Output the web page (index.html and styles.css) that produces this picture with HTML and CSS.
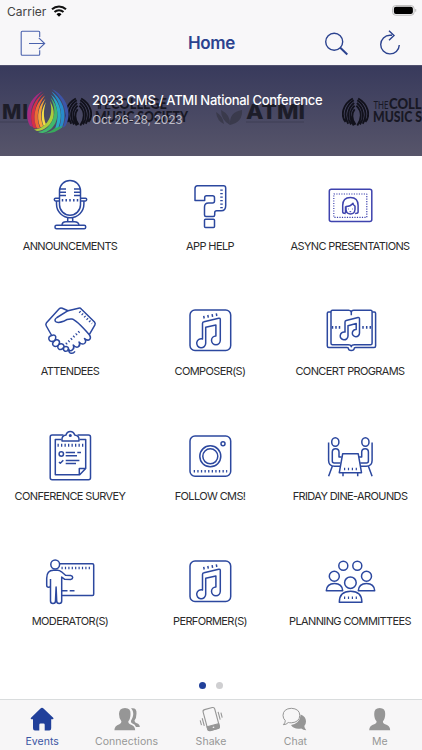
FILE: index.html
```
<!DOCTYPE html>
<html lang="en">
<head>
    <meta charset="UTF-8">
    <meta name="viewport" content="width=device-width, initial-scale=1.0">
    <title>Home</title>
    <link rel="stylesheet" href="styles.css">
</head>
<body>

<!-- Shared shapes -->
<svg class="defs" width="0" height="0">
    <symbol id="note" viewBox="0 0 60 60">
        <rect x="10" y="10" width="40.7" height="40.5" rx="5"/>
        <path d="M22.5 23.6q0-1.5 1.5-1.8L38.7 18.2q1.6-.3 1.6 1.3V40.3a4.4 4.4 0 1 1-4.4-4.4V24.9L25.7 27.3V43.3a4.5 4.5 0 1 1-3.2-4.3z"/>
        <path d="M24.2 18.5l-.5-2.7M28.3 17.7l-.5-2.7M32.6 16.8l-.5-2.7M36.8 16l-.5-2.7"/>
    </symbol>
    <symbol id="leaf" viewBox="0 0 30 32">
        <path d="M12 1C1 7-2 20 4 27M13 3C4 9 1 20 7 29M13.500 6C7 11 4 21 10 30M14 9C9 14 7 22 13 31M14 13C11 17 10 24 15 30"/>
        <path d="M18 1c11 6 14 19 8 26M17 3c9 6 12 17 6 26M16.500 6c6.500 5 9.500 15 3.500 24M16 9c5 5 7 13 1 22"/>
    </symbol>
</svg>

<div class="screen">
    <header class="header">
        <div class="status-bar">
            <span>Carrier</span>
            <svg class="wifi" viewBox="0 0 16 12">
                <path d="M1 4.300a10.200 10.200 0 0 1 14 0M3.500 7a6.600 6.600 0 0 1 9 0"/>
                <path class="fill" d="M8 11.700L5.500 9.200a3.600 3.600 0 0 1 5 0z"/>
            </svg>
            <svg class="battery" viewBox="0 0 25 11">
                <rect class="shell" x=".6" y=".6" width="21.500" height="9.600" rx="3"/>
                <rect class="fill" x="1.900" y="1.700" width="19" height="7.400" rx="2"/>
                <path class="shell" d="M23.700 4v2.700"/>
            </svg>
        </div>
        <nav class="nav-bar">
            <svg class="nav-icon exit" viewBox="0 0 28 28">
                <path d="M20.700 7V2.300q0-1-1-1H3.200q-1 0-1 1v22q0 1 1 1h16.500q1 0 1-1V20.200"/>
                <path d="M10 13.500h15.500M19.800 7.800l5.900 5.700-5.900 5.700"/>
            </svg>
            <h1>Home</h1>
            <div class="nav-actions">
                <svg class="nav-icon" viewBox="0 0 28 28">
                    <circle cx="12.200" cy="11.700" r="8.500"/>
                    <path d="M18.300 17.800l7 6.700" stroke-width="2"/>
                </svg>
                <svg class="nav-icon" viewBox="0 0 28 28">
                    <path d="M16 5.300h-2a9.300 9.300 0 1 0 9.300 9.700M13 .8l5 4.700-5 4.700"/>
                </svg>
            </div>
        </nav>
    </header>

    <section class="banner">
        <svg class="banner-art" viewBox="0 0 422 90">
            <text class="wide" x="2" y="53" textLength="26">MI</text>
            <path class="rule" d="M0 56h28M246 56h58"/>
            <use href="#leaf" x="65" y="30" width="27" height="32"/>
            <text class="thin" x="95" y="43" font-size="12" textLength="16">THE</text>
            <text x="111" y="43" font-size="15" textLength="56" lengthAdjust="spacingAndGlyphs">COLLEGE</text>
            <text x="95" y="55.500" font-size="15.500" textLength="93" lengthAdjust="spacingAndGlyphs">MUSIC SOCIETY</text>
            <g class="faded">
                <path d="M216 46q1 9 8 12q-1-8-8-12zM221 44q0 10 9 15q1-10-9-15zM242 44q-13 2-12 15q13-3 12-15z"/>
            </g>
            <text class="wide" x="246" y="53" textLength="59" lengthAdjust="spacingAndGlyphs">ATMI</text>
            <use href="#leaf" x="342" y="30" width="27" height="32"/>
            <text class="thin" x="373.500" y="43" font-size="12" textLength="15" lengthAdjust="spacingAndGlyphs">THE</text>
            <text x="389" y="43" font-size="15.500" textLength="57" lengthAdjust="spacingAndGlyphs">COLLEGE</text>
            <text x="373" y="55.500" font-size="15.500" textLength="93" lengthAdjust="spacingAndGlyphs">MUSIC SOCIETY</text>
        </svg>
        <svg class="banner-logo" viewBox="0 0 42 46">
            <path fill="#a72b81" d="M16 3C3 9-4 25 3 38l3 1C1 26 5 12 16 3z"/>
            <path fill="#d62e49" d="M17 5C6 12 1 27 6.500 40l3 .5C5 28 8 14 17 5z"/>
            <path fill="#ed6a35" d="M18 7.500C9 14 4.500 28 10 40.500l3-.5C8.500 29 11 17 18 7.500z"/>
            <path fill="#f5a33a" d="M18.500 10.500C12 17 8.500 28 13.500 39.500l2.700-1.200C12.500 29 14 19 18.500 10.500z"/>
            <path fill="#f5dc45" d="M19 14C15 20 13 29 16.700 38l2.300-1.500C16 29 16.500 21 19 14z"/>
            <path fill="#3d55a8" d="M25 1C39 8 46 24 38.500 38l-3 2C42 26 37 12 25 1z"/>
            <path fill="#278bca" d="M24.500 3.500C36 11 41 26 35 39.500l-3.500 2C37 28 34 15 24.500 3.500z"/>
            <path fill="#29aac5" d="M24 6.500C33 14 37 27 31 40.500l-4 2.500C33 30 31 18 24 6.500z"/>
            <path fill="#40b76d" d="M23.500 9.500C31 17 34 32 24 41q-4 3-8 4-3 .3-5-1 8-1 13-9C29 27 28 18 23.500 9.500z"/>
            <path fill="#a9ce3e" d="M23 13C28 21 29 32 20 39q-5 4-10 4l-3-1.500q7 0 13-7C25 28 25 20 23 13z"/>
            <path fill="#38a95c" d="M36 38q-6 7.500-19 7.500 7-2 11-5.500z"/>
        </svg>
        <div class="banner-text">
            <h2>2023 CMS / ATMI National Conference</h2>
            <p>Oct 26-28, 2023</p>
        </div>
    </section>

    <main class="grid">
        <a class="item">
            <svg viewBox="0 0 60 60">
                <rect x="19.500" y="5.500" width="21" height="34.700" rx="10.500"/>
                <path d="M20 14h6M20 17.300h6M20 20.500h6M40 14h-6M40 17.300h-6M40 20.500h-6"/>
                <path d="M22.500 24v2.500M26.200 24v2.500M30 24v2.500M33.800 24v2.500M37.500 24v2.500"/>
                <path d="M19.500 23.300h-4q-1.200 0-1.200 1.300t1.200 1.300h4M40.500 23.300h5q1.200 0 1.200 1.300t-1.200 1.300h-5"/>
                <path d="M16.500 26v3a13.700 13.700 0 0 0 27.400 0v-3M27.700 43v4M32.700 43v4M22 50.300q0-3.500 4-3.500h8.500q4 0 4.500 3.500"/>
                <rect x="15" y="50.300" width="30.700" height="3.500" rx="1.500"/>
            </svg>
            <span>ANNOUNCEMENTS</span>
        </a>
        <a class="item">
            <svg viewBox="0 0 60 60">
                <path d="M17.500 10.700h26q2.200 0 2.200 2.200v17.500q0 5.300-4.500 5.300h-4.500q-2 0-2 2v2.300q0 1.500-1.500 1.500h-7.200q-1.500 0-1.500-1.500v-8q0-4 4-4h4q2 0 2-2v-3.300q0-2-2-2h-6q-1.800 0-1.800 1.800v3H15v-12q0-2.800 2.500-2.800z"/>
                <rect x="24.500" y="44.200" width="10" height="8.300" rx="1"/>
                <path d="M41.500 14.500v19" stroke-dasharray="1.300 2.200" stroke-width="2.500"/>
            </svg>
            <span>APP HELP</span>
        </a>
        <a class="item">
            <svg class="violet" viewBox="0 0 60 60">
                <rect x="9.300" y="14.300" width="42.500" height="32.300" rx="2"/>
                <rect class="dots" x="13.800" y="19" width="33" height="23.300"/>
                <path d="M22.700 37v-6.500q0-8 7.700-8t7.700 8V37q0 1.500-3 1.500M22.700 37q0 1.500 3 1.500M26 31.500v3q.5 4.500 4.500 4.500t4.500-4.500v-3.300q-2-1-2-3-2.500 3.300-7 3.300zM25.500 38v-6.500"/>
                <path d="M28 34h.7M32 34h.7M29.500 36.700h1.700" stroke-width="1"/>
            </svg>
            <span>ASYNC PRESENTATIONS</span>
        </a>

        <a class="item">
            <svg viewBox="0 0 60 60">
                <path d="M11.700 35.500L6.300 26q-1-1.700.2-3.200L19 9q1.500-1.500 3.300-.7L28 10.700l10.500-2.500q1.800-.4 3 1L54.500 22q1.300 1.500.3 3.200l-5.500 9.500"/>
                <path d="M28 10.700L17 17.500q-3 2-1.500 4 2 2 8-.2 4-2.700 8.300-2.300Q36 19.500 49.300 34.700q2 2.500.5 4.500-2 2.200-5.300-.7 2.300 3 0 5-2.500 1.700-5.500-1.500 1.700 3-.5 4.700-2.300 1.600-5.300-1.700 1.500 3-.5 4.500-2 2.500-5.400 0"/>
                <path d="M11.700 35.500q-3.700 1-2.700 4t5.500 1.300q-3 2.500-1.200 4.700 2.500 2.300 5.400-.8-2 3 .3 4.500 2.700 1.300 4.800-2-1 3 1 4 2.300.7 4.200-1.800-.5 2.300 1 3.400 3 1.500 5-1.500M11.700 35.500q3-1.300 4 1 .5 2-1.200 4.300 2.500-2 4.300-.2 1.500 1.700-.1 4.100 2.400-1.900 4.300-.3 1.500 1.500.8 2.800 2.500-1.500 4 0 1.200 1 .2 2.200"/>
                <path class="diag" d="M39.500 11.500l12.500 12M39.300 31.500L26 44"/>
            </svg>
            <span>ATTENDEES</span>
        </a>
        <a class="item">
            <svg><use href="#note"/></svg>
            <span>COMPOSER(S)</span>
        </a>
        <a class="item">
            <svg viewBox="0 0 60 60">
                <path d="M31.300 15.300v-3q-.5-2-2.500-2H12.500q-1.500 0-1.500 1.500v31.500q0 1.500 1.500 1.500H28q3.300 0 3.300 2 0-2 3.300-2h16q1.500 0 1.500-1.500V11.800q0-1.500-1.500-1.500H33.800q-2.500 0-2.500 2"/>
                <path d="M11 12H8.500Q7.300 12 7.300 13.200V46q0 1.500 1.500 1.500H27q1.500 0 1.500 1.300 0 1.700 2.800 1.700t2.800-1.700q0-1.300 1.500-1.300h18.500q1.500 0 1.500-1.500V13.200q0-1.200-1.200-1.200h-2.200"/>
                <path d="M25 22q0-1.200 1.200-1.500L38 17.600q1.500-.3 1.500 1.200V33a3.600 3.600 0 1 1-3.300-3.500V23.500L28 25.700V36a3.900 3.900 0 1 1-3-3.900z"/>
                <path d="M12.500 26v2.700M16 26v2.700M19.500 26v2.700M43 26v2.700M46.700 26v2.700M50.300 26v2.700"/>
            </svg>
            <span>CONCERT PROGRAMS</span>
        </a>

        <a class="item">
            <svg viewBox="0 0 60 60">
                <path d="M23.500 9H12.200q-2 0-2 2v40.700q0 2 2 2h36.300q2 0 2-2V11q0-2-2-2H37.500"/>
                <path d="M21.500 13.500h-6.200v35.200h24.400l6-6.200v-29h-6.200M39.300 48.700v-6.200h6.400"/>
                <path d="M22 15q-.7-5.500 4-6 1-3.500 4.300-3.500T34.700 9q5 .5 4.300 6z"/>
                <circle cx="30.300" cy="9.500" r=".8"/>
                <path d="M17.500 19.300h27" stroke-width="3" stroke-dasharray="1.300 2.200"/>
                <circle cx="21.300" cy="28" r="2.200"/>
                <path d="M25.700 26.600H35M37.300 26.600H41M25.700 29.700H37M25.700 34.500h13.700M25.700 37.600H36M19 36l1.300 1.300 3-3"/>
            </svg>
            <span>CONFERENCE SURVEY</span>
        </a>
        <a class="item">
            <svg viewBox="0 0 60 60">
                <rect x="10" y="10" width="40.700" height="40.300" rx="5"/>
                <circle cx="30.300" cy="30.300" r="10.500"/>
                <circle cx="30.300" cy="30.300" r="7.500"/>
                <circle cx="43" cy="17.700" r="2"/>
                <path d="M13.700 45.300h33.500" stroke-width="2.600" stroke-dasharray="1.300 2.300"/>
            </svg>
            <span>FOLLOW CMS!</span>
        </a>
        <a class="item">
            <svg viewBox="0 0 60 60">
                <g id="diner">
                    <ellipse cx="15.300" cy="16" rx="3.600" ry="4.300"/>
                    <path d="M8.600 16.500V34.500q0 5.700 6 5.700h5.600M12.500 39.700L8.600 50.300M12.300 35V26q0-3.300 3.300-3.300T19 26v5h2.700M12.300 35q0 2 2 2h6.200"/>
                </g>
                <use href="#diner" transform="matrix(-1 0 0 1 60.700 0)"/>
                <path d="M22.700 27.700h15.500l3.300 19H19.300zM23 47v3.300M37.700 47v3.300"/>
                <path d="M24 43h14" stroke-width="2.600" stroke-dasharray="1.200 2.700"/>
            </svg>
            <span>FRIDAY DINE-AROUNDS</span>
        </a>

        <a class="item">
            <svg viewBox="0 0 60 60">
                <circle cx="15.200" cy="13.500" r="4.400"/>
                <path d="M19.500 12.700h33q1.200 0 1.200 1.200v29.300q0 1.200-1.200 1.200h-31"/>
                <path d="M21.500 17h29.500" stroke-width="2.500" stroke-dasharray="1.200 2.200"/>
                <path d="M10.500 28v22q0 2.500 2.500 2.500t2.500-2.500l.6-14 .6 14q0 2.500 2.500 2.500t2.500-2.500V26l3 2.300 6 .2q2-.3 2-2t-2-2l-5.200-.3-4-3.400q-2-1.500-4-1.500h-4q-6.800 0-6.800 8v7q0 2 1.900 2t1.900-2"/>
                <path d="M22 39.700h5.500M29.700 39.700h4.800"/>
            </svg>
            <span>MODERATOR(S)</span>
        </a>
        <a class="item">
            <svg><use href="#note"/></svg>
            <span>PERFORMER(S)</span>
        </a>
        <a class="item">
            <svg viewBox="0 0 60 60">
                <circle cx="23.300" cy="14.700" r="4.500"/>
                <circle cx="37.300" cy="14.700" r="4.500"/>
                <circle cx="14.300" cy="25.300" r="5"/>
                <circle cx="46.500" cy="25.300" r="5"/>
                <circle cx="30.400" cy="31.700" r="5.800"/>
                <path d="M6.300 39.700q.5-7.200 8.200-7.200t8.200 7.200zM38.300 39.700q.5-7.200 8.200-7.200t8.200 7.200zM19.300 51.300q0-11 11.300-11t11.300 11z"/>
                <path d="M24 46.700h14" stroke-width="2.500" stroke-dasharray="1.200 2.700"/>
            </svg>
            <span>PLANNING COMMITTEES</span>
        </a>
    </main>

    <div class="pager">
        <span class="dot active"></span>
        <span class="dot"></span>
    </div>

    <footer class="tab-bar">
        <a class="tab active">
            <svg viewBox="0 0 30 26">
                <path d="M15 1.800q.8 0 1.500.7l9.700 9.200q1 1.500-.7 1.500h-1.300v9q0 2.200-2 2.200h-4.500v-5.700q0-1.200-1.200-1.200h-3q-1.200 0-1.200 1.200v5.700H8q-2 0-2-2.200v-9H4.700q-1.700 0-.7-1.500l9.500-9.200q.7-.7 1.500-.7z"/>
            </svg>
            <span>Events</span>
        </a>
        <a class="tab">
            <svg viewBox="0 0 30 26">
                <path d="M19 2.300q6-1 5.500 5.200 0 4.500-2 7 0 2 2.300 2.700 3 1 3 3.800H24q-.7-2.500-4-3.700-1.500-.8-1-2.500 3-5 2-9-.3-2-2-3.500z"/>
                <path d="M13 1.900q6 0 5.500 6 0 5-2.200 7.300-.3 2 1.700 3 5.200 1.500 5.200 6H2.400q0-4.500 5-6 2.200-.8 2-3Q7 12.500 7 7.900q0-6 6-6z"/>
            </svg>
            <span>Connections</span>
        </a>
        <a class="tab">
            <svg class="line" viewBox="0 0 30 26">
                <g transform="rotate(-15 15 13)">
                    <rect x="9.200" y="2.300" width="12" height="21.500" rx="2"/>
                    <path class="solid" d="M9.200 19.500h12v2.500q0 2-2 2h-8q-2 0-2-2z"/>
                    <path d="M14.500 21.700h1.500" stroke="#f7f6f7"/>
                    <path d="M6.700 10v8M4.200 11.500v5M23.700 8v8M26.200 9.500v5"/>
                </g>
            </svg>
            <span>Shake</span>
        </a>
        <a class="tab">
            <svg viewBox="0 0 30 26">
                <path d="M20.700 8.500q5.300 2 5.300 7 0 2.700-1.700 4.500.2 2.500 2 4.200-3.300 0-5-1.700-7.300 1.300-10.300-3.500 9-1.500 9.700-10.500z"/>
                <path class="outline" d="M11.300 2.300q8.300.4 8.500 7-.2 7-8.500 7.500-1.700 0-3-.3-2 2.200-5 2.200 2-1.700 2-4Q3 12.500 3 9.300q.3-6.600 8.300-7z"/>
            </svg>
            <span>Chat</span>
        </a>
        <a class="tab">
            <svg viewBox="0 0 30 26">
                <path d="M14.700 1.900q5.800 0 5.500 6 0 5-2.300 7.300-.2 2 1.700 2.800 5.500 1.500 5.600 6.200h-21q0-4.700 5.600-6.200 2-.8 1.800-2.800-2.400-2.300-2.400-7.300-.2-6 5.500-6z"/>
            </svg>
            <span>Me</span>
        </a>
    </footer>
</div>

</body>
</html>
```

FILE: styles.css
```
/* General styling */
* {
    box-sizing: border-box;
}

body {
    font-family: 'Inter', 'Liberation Sans', sans-serif;
    margin: 0;
    background-color: #fff;
}

h1, h2, p {
    margin: 0;
}

.defs {
    display: block;
}

.screen {
    width: 422px;
    height: 750px;
    display: flex;
    flex-direction: column;
    overflow: hidden;
}

/* Header */
.header {
    height: 65px;
    background-color: #f8f7f9;
}

.status-bar {
    height: 22px;
    padding: 0 5px 0 7px;
    display: flex;
    align-items: center;
    gap: 5px;
    font-size: 12px;
    color: #444;
}

.status-bar svg {
    margin-bottom: 1px;
}

.wifi {
    width: 16px;
    height: 12px;
    fill: none;
    stroke: #111;
    stroke-width: 2;
}

.wifi .fill, .battery .fill {
    fill: #000;
    stroke: none;
}

.battery {
    width: 25px;
    height: 11px;
    margin-left: auto;
}

.battery .shell {
    fill: none;
    stroke: #bbb;
}

.nav-bar {
    height: 43px;
    padding: 0 18px 0 19px;
    display: grid;
    grid-template-columns: 1fr auto 1fr;
    align-items: center;
}

.nav-bar h1 {
    font-size: 17px;
    font-weight: 600;
    line-height: 22px;
    letter-spacing: -0.3px;
    margin-bottom: 2px;
    color: #2b428f;
}

.nav-icon {
    width: 28px;
    height: 28px;
    fill: none;
    stroke: #2b428f;
    stroke-width: 1.4;
}

.exit {
    stroke: #4a62ad;
    stroke-width: 1.1;
}

.nav-actions {
    display: flex;
    justify-content: flex-end;
    gap: 26px;
}

/* Banner */
.banner {
    position: relative;
    height: 91px;
    padding-left: 27px;
    display: flex;
    align-items: center;
    gap: 23px;
    border-top: 1px solid #50516f;
    background: linear-gradient(#383a5c, #57556a);
}

.banner-art {
    position: absolute;
    top: 0;
    left: 0;
    width: 422px;
    height: 90px;
    font-family: 'Lato', sans-serif;
    font-weight: 900;
    fill: #181824;
}

.banner-art .wide {
    font-family: 'Inter', sans-serif;
    font-size: 20.500px;
    font-weight: 800;
    fill: #1d1d29;
}

.banner-art .thin {
    font-weight: 400;
}

.banner-art use {
    fill: none;
    stroke: #11111b;
    stroke-width: 2.1;
}

.banner-art .rule {
    stroke: #39394d;
    stroke-width: 0.7;
}

.banner-art .faded {
    fill: #3a3a4c;
}

.banner-logo {
    position: relative;
    width: 42px;
    height: 46px;
}

.banner-text {
    position: relative;
    white-space: nowrap;
}

.banner-text h2 {
    font-size: 13px;
    font-weight: 500;
    line-height: 19px;
    letter-spacing: -0.29px;
    margin-top: -2px;
    color: #fff;
}

.banner-text p {
    font-size: 12px;
    line-height: 19px;
    letter-spacing: -0.25px;
    color: #bdbcc6;
}

/* Icon grid */
.grid {
    height: 501px;
    display: grid;
    grid-template-columns: repeat(3, 140px);
    grid-auto-rows: 125.33px;
}

.item {
    display: flex;
    flex-direction: column;
    align-items: center;
    padding-top: 19px;
    white-space: nowrap;
}

.item svg {
    width: 60px;
    height: 60px;
    fill: none;
    stroke: #2c489f;
    stroke-width: 1.5;
    stroke-linejoin: round;
}

.item .violet {
    stroke: #3e43ae;
}

.item .dots {
    stroke-width: 1.2;
    stroke-dasharray: 1.2 1.3;
}

.item .diag {
    stroke-width: 2.3;
    stroke-dasharray: 1.2 2.2;
}

.item span {
    margin-top: 2.500px;
    font-size: 11px;
    line-height: 16px;
    letter-spacing: -0.62px;
    color: #2b2b2b;
}

/* Page dots */
.pager {
    height: 42px;
    padding-top: 24.500px;
    display: flex;
    justify-content: center;
    gap: 9.500px;
}

.dot {
    width: 7px;
    height: 7px;
    border-radius: 50%;
    background-color: #cfcfd1;
}

.dot.active {
    background-color: #21409a;
}

/* Tab bar */
.tab-bar {
    height: 51px;
    display: grid;
    grid-template-columns: repeat(5, 1fr);
    border-top: 1px solid #d9dcdd;
    background-color: #f7f6f7;
}

.tab {
    display: flex;
    flex-direction: column;
    align-items: center;
    padding-top: 6px;
    font-size: 10.500px;
    line-height: 14px;
    letter-spacing: 0.05px;
    color: #969696;
}

.tab svg {
    width: 30px;
    height: 26px;
    margin-bottom: 3px;
    fill: #969696;
}

.tab.active {
    color: #3b55a3;
}

.tab.active svg {
    fill: #21409a;
}

.tab .line {
    fill: none;
    stroke: #969696;
    stroke-width: 1.1;
}

.tab .solid {
    fill: #969696;
}

.tab .outline {
    fill: #f7f6f7;
    stroke: #969696;
}
```
